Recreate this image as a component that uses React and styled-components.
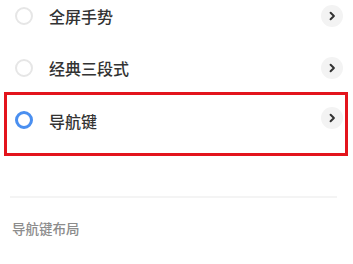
import React from "react";
import styled, { createGlobalStyle } from "styled-components";

const Global = createGlobalStyle`
  html, body { margin: 0; padding: 0; background: #fff; }
  body { font-family: "Noto Sans CJK SC", "Noto Sans", sans-serif; overflow: hidden; }
`;

const Page = styled.div`
  position: relative;
  width: 353px;
  height: 264px;
  overflow: hidden;
  background: #fff;
`;

const List = styled.div`
  margin-top: -10px;
  display: flex;
  flex-direction: column;
`;

const Row = styled.div`
  height: 52px;
  display: flex;
  align-items: center;
  padding: 0 10px 0 15px;
`;

const Radio = styled.span`
  box-sizing: border-box;
  width: 18px;
  height: 18px;
  border-radius: 50%;
  flex: none;
  border: ${(p) => (p.$checked ? "3.5px solid #4a8ff0" : "2px solid #e6e6e6")};
`;

const Label = styled.span`
  margin-left: 16px;
  flex: 1;
  font-size: 16px;
  font-weight: 500;
  color: #333;
  line-height: 1;
  margin-top: ${(p) => (p.$nudge ? "2px" : "-1px")};
`;

const Chevron = styled.span`
  width: 22px;
  height: 22px;
  border-radius: 50%;
  background: #f3f3f3;
  display: flex;
  align-items: center;
  justify-content: center;
  margin-top: ${(p) => (p.$up ? "-4px" : "-1px")};
`;

const Highlight = styled.div`
  position: absolute;
  left: 4px;
  top: 92px;
  width: 344px;
  height: 64px;
  box-sizing: border-box;
  border: 3px solid #e3141c;
  pointer-events: none;
`;

const Divider = styled.div`
  margin: 50px 16px 0 10px;
  height: 2px;
  background: #f4f4f4;
`;

const SectionTitle = styled.div`
  margin: 24px 0 0 12px;
  font-size: 13.5px;
  font-weight: 500;
  color: #8c8c8c;
  line-height: 1;
`;

const Arrow = () => (
  <svg width="10" height="10" viewBox="0 0 10 10">
    <path d="M3.6 1.8 L6.9 5 L3.6 8.2" fill="none" stroke="#333" strokeWidth="2" strokeLinecap="round" strokeLinejoin="round" />
  </svg>
);

const items = [
  { label: "全屏手势" },
  { label: "经典三段式" },
  { label: "导航键", checked: true },
];

export default function App() {
  return (
    <Page>
      <Global />
      <List>
        {items.map((it) => (
          <Row key={it.label}>
            <Radio $checked={it.checked} />
            <Label $nudge={it.checked}>{it.label}</Label>
            <Chevron $up={it.checked}>
              <Arrow />
            </Chevron>
          </Row>
        ))}
      </List>
      <Divider />
      <SectionTitle>导航键布局</SectionTitle>
      <Highlight />
    </Page>
  );
}
